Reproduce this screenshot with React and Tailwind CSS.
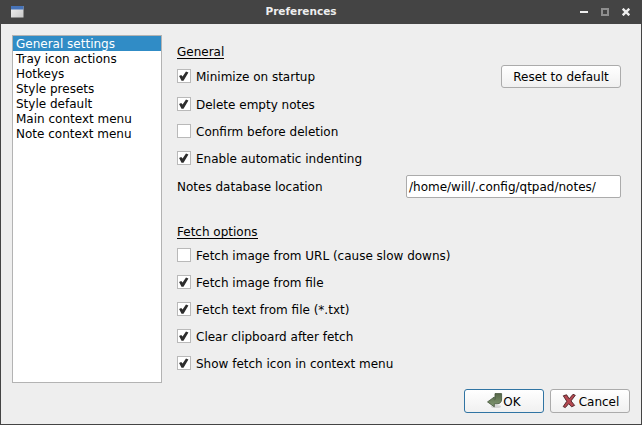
const pages = [
  "General settings",
  "Tray icon actions",
  "Hotkeys",
  "Style presets",
  "Style default",
  "Main context menu",
  "Note context menu",
];

function Check({ label, checked }) {
  return (
    <div className="flex h-[14px] items-start gap-[5px]">
      <span className="flex h-[14px] w-[14px] shrink-0 items-center justify-center border border-[#b9b9b9] bg-white">
        {checked && (
          <svg width="12" height="12" viewBox="0 0 12 12" className="shrink-0">
            <path d="M1.1 6 L3.2 4.9 L4.6 6.6 L8 1.5 L10.4 2.6 L5.5 10.7 L3.5 10.7 Z" fill="#2d2d2d" />
          </svg>
        )}
      </span>
      <span className="leading-[17px]">{label}</span>
    </div>
  );
}

function Button({ children, className }) {
  return (
    <button
      className={`flex items-center justify-center rounded-[3px] border bg-linear-to-b from-white to-[#f0f0f0] ${className}`}
    >
      {children}
    </button>
  );
}

function TitleBar() {
  return (
    <header className="flex h-6 shrink-0 items-center bg-[#444444] pr-[11px] pl-[10px]">
      <svg width="14" height="12" viewBox="0 0 14 12" className="shrink-0">
        <defs>
          <linearGradient id="pane" x1="0" y1="0" x2="1" y2="1">
            <stop offset="0" stopColor="#f2f2f2" />
            <stop offset="1" stopColor="#c8c8c8" />
          </linearGradient>
        </defs>
        <rect width="12.5" height="11.5" fill="url(#pane)" />
        <rect width="12.5" height="3.5" fill="#4673b8" />
      </svg>
      <h1 className="flex-1 pr-[3px] pb-[2px] text-center text-[10.5px] leading-[22px] font-bold text-[#eeeeee]">Preferences</h1>
      <div className="flex items-center gap-[13px]">
        <svg width="8" height="8" viewBox="0 0 8 8">
          <rect y="3" width="8" height="2" fill="#eeeeee" />
        </svg>
        <svg width="8" height="8" viewBox="0 0 8 8">
          <rect x="1" y="1" width="6" height="6" fill="none" stroke="#8e8e8e" strokeWidth="2" />
        </svg>
        <svg width="8" height="8" viewBox="0 0 8 8">
          <path d="M0.7 0.7 L7.3 7.3 M7.3 0.7 L0.7 7.3" stroke="#eeeeee" strokeWidth="2.4" />
        </svg>
      </div>
    </header>
  );
}

export default function App() {
  return (
    <div className="flex h-[425px] w-[642px] flex-col overflow-hidden border-r border-b border-l border-[#444444] bg-[#eeeeee] font-['DejaVu_Sans',sans-serif] text-[12px] leading-[15px] whitespace-nowrap text-black">
      <TitleBar />
      <main className="flex px-[11px] pt-[11px]">
        <ul className="h-[348px] w-[150px] shrink-0 border border-[#b3b3b3] bg-white leading-[17px]">
          {pages.map((page, i) => (
            <li key={page} className={i === 0 ? "h-[15px] bg-[#308cc6] pl-[3px] text-white" : "h-[15px] pl-[3px]"}>
              {page}
            </li>
          ))}
        </ul>
        <div className="flex flex-1 flex-col pt-2 pr-[9px] pl-[15px]">
          <h2 className="h-4 self-start border-b border-black leading-[18px]">General</h2>
          <div className="mt-[6px] flex h-[23px] items-start justify-between">
            <div className="pt-1">
              <Check label="Minimize on startup" checked />
            </div>
            <Button className="h-[23px] w-[120px] border-[#ababab] pt-[2px]">Reset to default</Button>
          </div>
          <div className="mt-[9px] flex flex-col gap-[13px]">
            <Check label="Delete empty notes" checked />
            <Check label="Confirm before deletion" />
            <Check label="Enable automatic indenting" checked />
          </div>
          <div className="mt-[10px] flex h-[23px] items-start justify-between">
            <span className="leading-[25px]">Notes database location</span>
            <div className="h-[23px] w-[215px] rounded-[2px] border border-[#ababab] bg-white pl-[2px] leading-[23px]">
              /home/will/.config/qtpad/notes/
            </div>
          </div>
          <h2 className="mt-[25px] h-4 self-start border-b border-black leading-[18px]">Fetch options</h2>
          <div className="mt-[9px] flex flex-col gap-[13px]">
            <Check label="Fetch image from URL (cause slow downs)" />
            <Check label="Fetch image from file" checked />
            <Check label="Fetch text from file (*.txt)" checked />
            <Check label="Clear clipboard after fetch" checked />
            <Check label="Show fetch icon in context menu" checked />
          </div>
        </div>
      </main>
      <footer className="mt-[6px] flex justify-end gap-[6px] pr-[11px]">
        <Button className="h-6 w-20 border-[#3074a3]">
          <svg width="16" height="16" viewBox="0 0 16 16">
            <defs>
              <linearGradient id="enter" x1="0" y1="0" x2="0" y2="1">
                <stop offset="0" stopColor="#586849" />
                <stop offset="1" stopColor="#829a73" />
              </linearGradient>
            </defs>
            <ellipse cx="9" cy="13.6" rx="5" ry="1.5" fill="#d4d4d4" />
            <path
              d="M8 0.6 H14.6 V6 Q14.6 10.8 10 10.8 H7.3 V13.8 L0.5 8.9 L7.3 4 V6.7 H8 Z"
              fill="url(#enter)"
              stroke="#43533a"
              strokeWidth="0.8"
            />
          </svg>
          <span className="pt-[2px]">OK</span>
        </Button>
        <Button className="h-6 w-20 gap-[2px] border-[#ababab]">
          <svg width="16" height="16" viewBox="0 0 16 16">
            <path
              d="M2.3 2.8 L5.6 1.8 L8.2 5.8 L12 1.3 L14.3 2.3 L10 7.9 L13.6 12.4 L10.6 13.8 L7.7 10.7 L4.3 14.6 L2.2 13.6 L5.8 8.3 Z"
              fill="#b54851"
              stroke="#481f23"
              strokeWidth="0.9"
              strokeLinejoin="round"
            />
          </svg>
          <span className="pt-[2px]">Cancel</span>
        </Button>
      </footer>
    </div>
  );
}
